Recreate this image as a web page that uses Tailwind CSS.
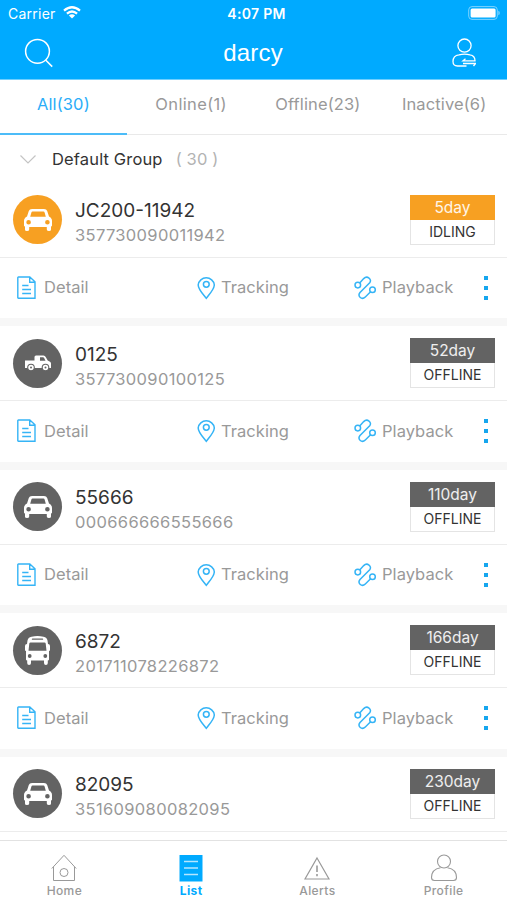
<!DOCTYPE html>
<html lang="en">
<head>
<meta charset="utf-8">
<title>Device list</title>
<script src="https://cdn.jsdelivr.net/npm/@tailwindcss/browser@4"></script>
</head>
<body class="bg-white">
<svg class="hidden">
  <symbol id="car" viewBox="0 0 28 22"><path fill="#fff" fill-rule="evenodd" d="M8 0H20Q22.500 0 23.200 2L25 7.500Q28 9 28 12V16.500Q28 17.500 27 17.500V20.500Q27 22 25 22T22.800 20.500V18H5.200V20.500Q5.200 22 3 22T1 20.500V17.500Q0 17.500 0 16.500V12Q0 9 3 7.500L4.800 2Q5.500 0 8 0ZM8.500 2.600Q7.700 2.600 7.400 3.400L6.200 7.700H21.800L20.600 3.400Q20.300 2.600 19.500 2.600ZM4.600 10.900A2.300 2.300 0 1 0 4.600 15.500A2.300 2.300 0 1 0 4.600 10.900ZM23.400 10.900A2.300 2.300 0 1 0 23.400 15.500A2.300 2.300 0 1 0 23.400 10.900Z"/></symbol>
  <symbol id="truck" viewBox="0 0 26 16"><path fill="#fff" fill-rule="evenodd" d="M0 5.500H9.500V2Q9.500 .5 11 .5H18.500Q20 .5 20.700 2L22.700 5.500L25 6.700Q26 7.200 26 8.500V13H0ZM15 2.200V5.700H20.500L19 2.800Q18.700 2.200 18 2.200Z"/><g fill="#fff" stroke="#636363" stroke-width="1.100"><circle cx="6" cy="12.500" r="3.300"/><circle cx="20.500" cy="12.500" r="3.300"/></g><g fill="#636363"><circle cx="6" cy="12.500" r="1"/><circle cx="20.500" cy="12.500" r="1"/></g></symbol>
  <symbol id="bus" viewBox="0 0 25 29"><path fill="#fff" fill-rule="evenodd" d="M6.500 .7Q12.500-.7 18.500 .7Q22 1.400 22.500 4.500L23 8Q25 8 25 10V14Q25 15 24 15V23.500Q24 24.500 22.800 24.500V27Q22.800 29 20.900 29T19 27V24.500H6V27Q6 29 4.100 29T2.200 27V24.500Q1 24.500 1 23.500V15Q0 15 0 14V10Q0 8 2 8L2.500 4.500Q3 1.400 6.500 .7ZM7.500 2.600Q6.800 2.600 6.800 3.200T7.500 3.800H17.500Q18.200 3.800 18.200 3.200T17.500 2.600ZM5.500 6.500Q4.500 6.500 4.300 7.500L3.500 14.800H21.500L20.700 7.500Q20.500 6.500 19.500 6.500ZM4.700 18.100A1.900 1.900 0 1 0 4.700 21.900A1.900 1.900 0 1 0 4.700 18.100ZM20.300 18.100A1.900 1.900 0 1 0 20.300 21.900A1.900 1.900 0 1 0 20.300 18.100Z"/></symbol>
  <symbol id="doc" viewBox="0 0 20 24"><path fill="none" stroke="#35b4f6" stroke-width="1.400" d="M1.400 1H12.800L18 5.800V22.200H1.400Q.8 22.200 .8 21.600V1.600Q.8 1 1.400 1ZM12.700 1V6.200H18M5.200 9.500H11.500M5.200 13.500H14M5.200 17.500H14"/></symbol>
  <symbol id="pin" viewBox="0 0 18 24"><path fill="none" stroke="#35b4f6" stroke-width="1.500" d="M9.300 22.300C6.800 18.800 1.200 13.500 1.200 8.900A8.100 8 0 0 1 17.300 8.900C17.300 13.500 11.800 18.800 9.300 22.300Z"/><circle cx="9.300" cy="8.300" r="2.900" fill="none" stroke="#35b4f6" stroke-width="1.500"/></symbol>
  <symbol id="route" viewBox="0 0 24 24"><g fill="none" stroke="#35b4f6" stroke-width="1.500"><circle cx="3.800" cy="9.100" r="2.800"/><circle cx="18.500" cy="13.700" r="2.800"/><path d="M5.700 7L9.700 2.600C13.200-.9 18.400 3.200 15.700 6.800L6 16.500C3.100 20.400 7.800 24.300 11.300 21L16.600 15.800"/></g></symbol>
</svg>
<div class="w-[507px] h-[900px] overflow-hidden flex flex-col bg-white font-['Inter',sans-serif] whitespace-nowrap">
  <header class="h-20 shrink-0 bg-[#00aaff] border-b border-[#6fcfff] text-white flex flex-col">
    <div class="h-[26px] grid grid-cols-3 items-center pl-2 pr-[7px]">
      <div class="flex items-center gap-[7px]">
        <span class="text-[14px] tracking-[0.25px]">Carrier</span>
        <svg class="w-[18px] h-[13px] -mt-px" viewBox="0 0 18 13" fill="none" stroke="#fff" stroke-width="2.200"><path d="M1 4.700Q9-2.200 17 4.700M3.900 7.700Q9 3.300 14.100 7.700"/><path fill="#fff" stroke="none" d="M5.900 9.500Q9 7 12.100 9.500L9 12.600Z"/></svg>
      </div>
      <div class="text-center text-[14px] font-semibold tracking-[0.3px] pl-[5px] pt-px">4:07 PM</div>
      <svg class="w-8 h-[14px] justify-self-end" viewBox="0 0 32 14"><rect x=".7" y=".6" width="28.600" height="12.800" rx="3.300" fill="none" stroke="#7dd3ff" stroke-width="1"/><rect x="2.600" y="2.400" width="25" height="9.200" rx="1.500" fill="#fff"/><path d="M30.300 4.800Q31.800 5.300 31.800 7T30.300 9.200Z" fill="#7dd3ff"/></svg>
    </div>
    <div class="flex-1 flex items-center justify-between pl-[24px] pr-[31px]">
      <svg class="w-[30px] h-[30px]" viewBox="0 0 30 30" fill="none" stroke="#fff" stroke-width="1.500"><circle cx="13.500" cy="13.300" r="11.900"/><path d="M21.600 22L28.200 28.600"/></svg>
      <h1 class="text-[24px] leading-none font-['Liberation_Sans',sans-serif] tracking-[0.2px] pt-px">darcy</h1>
      <svg class="w-6 h-[30px]" viewBox="0 0 24 30" fill="none" stroke="#fff" stroke-width="1.300"><circle cx="12.500" cy="7.600" r="6.600"/><path d="M14.500 28H5.500Q1 28 1 23.500Q1 17.500 7 16.800Q12.500 15.300 18 16.800Q23 17.500 23 22.800H11L13.500 20.700M11 25.500H23.500L21.500 28"/></svg>
    </div>
  </header>
  <nav class="h-[55px] shrink-0 grid grid-cols-4 border-b border-[#e9e9e9] text-[16.500px] tracking-[0.12px] text-[#999] text-center">
    <div class="relative h-full flex items-center justify-center pb-[5px] text-[#2badf8]"><span>All(30)</span><i class="absolute left-0 right-0 -bottom-px h-[2px] bg-[#4cbcf8]"></i></div>
    <div class="flex items-center justify-center pb-[5px] pl-[2px] tracking-[0.35px]">Online(1)</div>
    <div class="flex items-center justify-center pb-[5px] pl-[2px]">Offline(23)</div>
    <div class="flex items-center justify-center pb-[5px] pl-px">Inactive(6)</div>
  </nav>
  <div class="h-[47.500px] shrink-0 flex items-center pl-5 pt-px text-[16.500px] tracking-[0.15px]">
    <svg class="w-4 h-[9px]" viewBox="0 0 16 9" fill="none" stroke="#c4c4c4" stroke-width="1.200"><path d="M.5 .5L8 8L15.500 .5"/></svg>
    <span class="ml-4 text-[#333]">Default Group</span>
    <span class="ml-[13px] text-[#b3b3b3]">( 30 )</span>
  </div>
  <main id="list" class="flex-1 min-h-0 overflow-hidden"></main>
  <footer class="h-[60px] shrink-0 border-t border-[#e2e2e2] bg-white grid grid-cols-4 text-[12px] font-medium tracking-[0.4px] text-[#999] text-center">
    <div class="flex flex-col items-center pt-[13px] pl-[2px]"><svg class="w-[26px] h-7" viewBox="0 0 26 28" fill="none" stroke="#999" stroke-width="1"><path d="M.8 14.500L13 1.300L25.200 14.500M2.500 12.800V26.500H23.500V12.800"/><circle cx="13" cy="18.500" r="4"/></svg><span class="leading-[18px]">Home</span></div>
    <div class="flex flex-col items-center pt-[13px] pl-[2px] text-[#00aaff] font-bold"><svg class="w-[26px] h-7" viewBox="0 0 26 28"><path fill="#00aaff" d="M1.500 1H24.500V27.500H1.500Z"/><path stroke="#b5e6ff" stroke-width="1.300" d="M6 7.500H20M6 14H20M6 20.500H20"/></svg><span class="leading-[18px]">List</span></div>
    <div class="flex flex-col items-center pt-[13px] pl-px"><svg class="w-[26px] h-7" viewBox="0 0 26 28" fill="none" stroke="#999" stroke-width="1.200"><path d="M13 4L25 25H1Z"/><path stroke-width="1.600" d="M13 11.500V18M13 20V22.200"/></svg><span class="leading-[18px]">Alerts</span></div>
    <div class="flex flex-col items-center pt-[13px]"><svg class="w-[28px] h-7" viewBox="0 0 28 28" fill="none" stroke="#999" stroke-width="1.100"><circle cx="14" cy="7.500" r="6.500"/><path d="M10.500 13.700Q1.500 15.200 1.500 23.500Q1.500 26.500 4.500 26.500H23.500Q26.500 26.500 26.500 23.500Q26.500 15.200 17.500 13.700"/></svg><span class="leading-[18px]">Profile</span></div>
  </footer>
</div>
<script>
const devices = [
  ['JC200-11942', '357730090011942', '5day', 'IDLING', 'car'],
  ['0125', '357730090100125', '52day', 'OFFLINE', 'truck'],
  ['55666', '000666666555666', '110day', 'OFFLINE', 'car'],
  ['6872', '201711078226872', '166day', 'OFFLINE', 'bus'],
  ['82095', '351609080082095', '230day', 'OFFLINE', 'car'],
];
const iconSize = { car: 'w-[28px] h-[22px]', truck: 'w-[26px] h-[16px]', bus: 'w-[25px] h-[29px]' };
const actions = `
    <div class="flex-1 flex items-center text-[16.500px] tracking-[0.05px] text-[#999] pl-[17px] pr-[19px]">
      <div class="w-[180px] flex items-center gap-[7px]"><svg class="w-5 h-6"><use href="#doc"/></svg>Detail</div>
      <div class="w-[157px] flex items-center gap-[6px]"><svg class="w-[18px] h-6"><use href="#pin"/></svg>Tracking</div>
      <div class="flex items-center gap-1"><svg class="w-6 h-6"><use href="#route"/></svg>Playback</div>
      <div class="ml-auto flex flex-col gap-[6px]"><i class="w-1 h-1 bg-[#16a6ee]"></i><i class="w-1 h-1 bg-[#16a6ee]"></i><i class="w-1 h-1 bg-[#16a6ee]"></i></div>
    </div>`;
document.getElementById('list').innerHTML = devices.map(([name, imei, days, status, icon], i) => {
  const color = status === 'IDLING' ? 'bg-[#f7a022]' : 'bg-[#636363]';
  const last = i === devices.length - 1;
  return `
  <article class="${last ? 'h-[75px]' : 'h-[143.500px] border-b-8'} border-[#f7f7f7] flex flex-col">
    <div class="h-[75px] shrink-0 border-b border-[#ececec] flex items-center pl-[13px] pr-[12px]">
      <div class="w-[49px] h-[49px] rounded-full ${color} flex items-center justify-center"><svg class="${iconSize[icon]}"><use href="#${icon}"/></svg></div>
      <div class="ml-[13px] flex-1 flex flex-col pt-[7px]">
        <span class="text-[19px] leading-[24px] text-[#333]">${name}</span>
        <span class="text-[16.500px] leading-[24px] tracking-[0.340px] text-[#999]">${imei}</span>
      </div>
      <div class="w-[85px] h-[50px] border border-[#e4e4e4] flex flex-col text-center">
        <div class="-mx-px -mt-px h-[25px] ${color} text-white/90 text-[15.500px] leading-[26px]">${days}</div>
        <div class="h-6 text-[#333] text-[14px] leading-[24px]">${status}</div>
      </div>
    </div>
    ${last ? '' : actions}
  </article>`;
}).join('');
</script>
</body>
</html>
